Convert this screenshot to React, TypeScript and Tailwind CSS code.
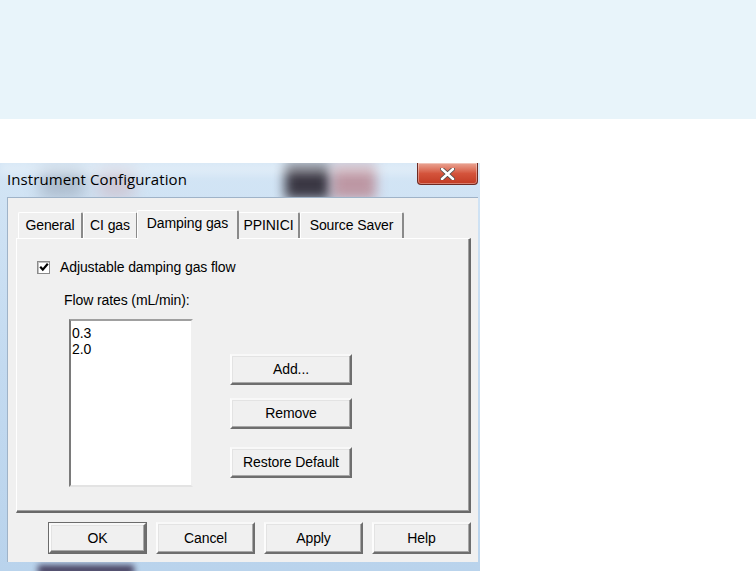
import { ReactNode } from "react";

const tabs = [
	{ label: "General", width: "w-[65px]" },
	{ label: "CI gas", width: "w-[55px]" },
	{ label: "Damping gas", width: "w-[102px]" },
	{ label: "PPINICI", width: "w-[62px]" },
	{ label: "Source Saver", width: "w-[104px]" },
];

const WinButton = ({
	children,
	className = "",
	isDefault = false,
}: {
	children: ReactNode;
	className?: string;
	isDefault?: boolean;
}) => (
	<div
		className={`${className} ${
			isDefault ? "border border-[#6b6b6b]" : ""
		} bg-[#f0f0f0]`}
	>
		<button
			type="button"
			className="w-full h-full flex items-center justify-center bg-[#f0f0f0] border-2 border-t-[#f8f8f8] border-l-[#fcfcfc] border-r-[#6e6e6e] border-b-[#6e6e6e] shadow-[inset_-1px_-1px_0_#a8a8a8,inset_1px_1px_0_#e3e3e3] text-[14px] tracking-[-0.1px] text-black"
		>
			{children}
		</button>
	</div>
);

const App = () => {
	return (
		<div className="w-[756px] h-[571px] bg-white overflow-hidden font-['Liberation_Sans',Arial,sans-serif]">
			<div className="h-[119px] bg-[#e8f4fa]" />
			<div className="h-[44px]" />

			{/* window frame */}
			<div className="relative w-[480px] h-[408px] flex flex-col pl-[7px] pr-[2px] pb-[9px] bg-gradient-to-b from-[#d3e5f5] via-[#c3daf0] to-[#b9d3ec] overflow-hidden">
				{/* blurred desktop behind the glass */}
				<div className="absolute left-[285px] top-[2px] w-[45px] h-[34px] bg-[#2a2530] blur-[6px] opacity-90" />
				<div className="absolute left-[332px] top-[2px] w-[44px] h-[34px] bg-[#b98590] blur-[6px] opacity-80" />
				<div className="absolute left-[40px] top-[6px] w-[44px] h-[30px] bg-[#7a8597] blur-[8px] opacity-40" />
				<div className="absolute left-[98px] top-[6px] w-[36px] h-[30px] bg-[#c9a0a8] blur-[8px] opacity-40" />
				<div className="absolute left-[38px] bottom-[-4px] w-[96px] h-[10px] bg-[#3a3050] blur-[3px] opacity-90" />
				<div className="absolute left-[0px] top-[0px] w-[480px] h-[12px] bg-white/30 blur-[4px]" />

				{/* title bar */}
				<div className="relative h-[34px] flex items-start">
					<span className="mt-[5px] text-[15px] text-black font-['Open_Sans','Noto_Sans',sans-serif] tracking-[0.1px]">
						Instrument Configuration
					</span>
					<div className="ml-auto w-[61px] h-[22px] rounded-b-[4px] border border-[#6e2a22] border-t-0 bg-gradient-to-b from-[#e9a595] via-[#d4543c] to-[#c23a22] flex items-center justify-center shadow-[inset_0_0_0_1px_rgba(255,255,255,0.35)]">
						<svg width="15" height="12" viewBox="0 0 15 12">
							<path
								d="M2 1 L13 11 M13 1 L2 11"
								stroke="#4a4a4a"
								strokeWidth="4.2"
								strokeLinecap="round"
							/>
							<path
								d="M2 1 L13 11 M13 1 L2 11"
								stroke="#ffffff"
								strokeWidth="2.6"
								strokeLinecap="round"
							/>
						</svg>
					</div>
				</div>

				{/* client area */}
				<div className="relative flex-1 bg-[#f0f0f0] border-l border-t border-[#9fb3c8] flex flex-col">
					{/* tabs */}
					<div className="flex items-end h-[40px] pl-[10px]">
						{tabs.map((tab) => {
							const active = tab.label === "Damping gas";
							return (
								<div
									key={tab.label}
									className={`${tab.width} ${
										active
											? "h-[29px] -mb-[1px] z-10 pb-[4px] -mx-[1px]"
											: "h-[26px] pb-0"
									} flex items-center justify-center bg-[#f0f0f0] rounded-t-[2px] border-t border-l border-white border-r-2 border-r-[#8a8a8a] text-[14px] tracking-[-0.1px] text-black`}
								>
									{tab.label}
								</div>
							);
						})}
					</div>

					{/* tab panel */}
					<div className="ml-[8px] w-[455px] h-[275px] border-t border-l border-white border-r-2 border-b-2 border-r-[#696969] border-b-[#696969] shadow-[inset_-1px_-1px_0_#a0a0a0] pt-[20px] pl-[20px] text-[14px] tracking-[-0.1px] text-black">
						<div className="flex items-center h-[16px]">
							<div className="w-[13px] h-[13px] bg-white border border-[#8a8a8a] shadow-[inset_1px_1px_0_#c0c0c0] flex items-center justify-center">
								<svg width="10" height="10" viewBox="0 0 10 10">
									<path
										d="M1.2 4.8 L3.8 7.6 L8.8 1.8"
										fill="none"
										stroke="#000"
										strokeWidth="2.2"
									/>
								</svg>
							</div>
							<span className="ml-[10px]">Adjustable damping gas flow</span>
						</div>

						<div className="ml-[27px] mt-[17px] leading-[16px]">
							Flow rates (mL/min):
						</div>

						<div className="flex mt-[11px]">
							<div className="ml-[32px] w-[124px] h-[168px] bg-white border-2 border-t-[#a0a0a0] border-l-[#7a7a7a] border-r-[#f0f0f0] border-b-[#e3e3e3] leading-[16px] pl-[1px] pt-[4px]">
								<div>0.3</div>
								<div>2.0</div>
							</div>

							<div className="ml-[37px] mt-[35px] flex flex-col">
								<WinButton className="w-[122px] h-[31px]">Add...</WinButton>
								<WinButton className="w-[122px] h-[31px] mt-[13px]">
									Remove
								</WinButton>
								<WinButton className="w-[122px] h-[31px] mt-[18px]">
									Restore Default
								</WinButton>
							</div>
						</div>
					</div>

					{/* dialog buttons */}
					<div className="flex mt-[9px] ml-[40px] gap-[9px]">
						<WinButton className="w-[99px] h-[32px]" isDefault>
							OK
						</WinButton>
						<WinButton className="w-[99px] h-[32px]">Cancel</WinButton>
						<WinButton className="w-[99px] h-[32px]">Apply</WinButton>
						<WinButton className="w-[99px] h-[32px]">Help</WinButton>
					</div>
				</div>
			</div>
		</div>
	);
};

export default App;
